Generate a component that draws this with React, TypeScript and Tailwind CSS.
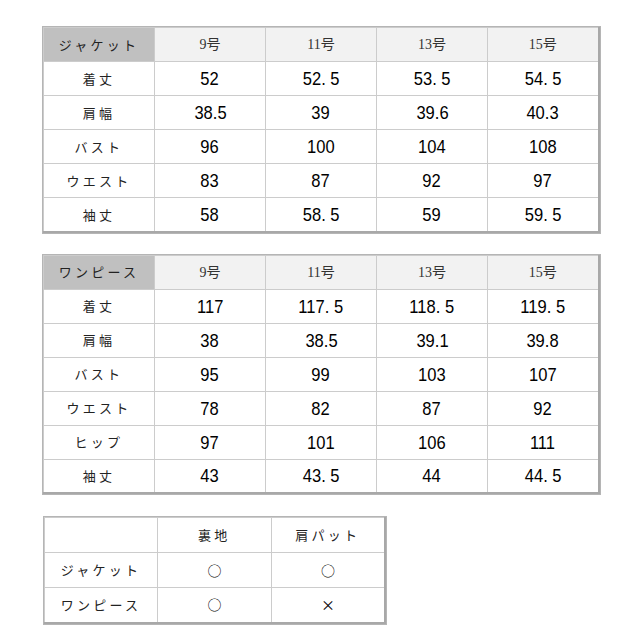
const jacket = {
  title: 'ジャケット',
  rows: [
    ['着丈', '52', '52. 5', '53. 5', '54. 5'],
    ['肩幅', '38.5', '39', '39.6', '40.3'],
    ['バスト', '96', '100', '104', '108'],
    ['ウエスト', '83', '87', '92', '97'],
    ['袖丈', '58', '58. 5', '59', '59. 5'],
  ],
};

const onepiece = {
  title: 'ワンピース',
  rows: [
    ['着丈', '117', '117. 5', '118. 5', '119. 5'],
    ['肩幅', '38', '38.5', '39.1', '39.8'],
    ['バスト', '95', '99', '103', '107'],
    ['ウエスト', '78', '82', '87', '92'],
    ['ヒップ', '97', '101', '106', '111'],
    ['袖丈', '43', '43. 5', '44', '44. 5'],
  ],
};

const sizes = ['9号', '11号', '13号', '15号'];

const jp = "font-['Noto_Sans_CJK_JP',sans-serif]";
const serifNum = "font-['Liberation_Serif','Noto_Sans_CJK_JP',serif]";
const num = "font-['Liberation_Sans','Noto_Sans_CJK_JP',sans-serif]";

const cell = 'border border-[#cccccc] text-center align-middle p-0';
const label = `${cell} ${jp} text-[13px] font-normal tracking-[0.25em] text-[#222]`;

const SizeTable = ({ data }: { data: typeof jacket }) => (
  <table className="w-[554px] table-fixed border-collapse border-r-2 border-b-2 border-[#a8a8a8] outline-1 outline-[#b5b5b5]">
    <thead>
      <tr className="h-[34px]">
        <th className={`${label} bg-[#c0c0c0] w-[111px]`}>{data.title}</th>
        {sizes.map(s => (
          <th
            key={s}
            className={`${cell} ${serifNum} bg-[#f2f2f2] text-[14px] font-normal text-[#333] w-[111px]`}>
            {s}
          </th>
        ))}
      </tr>
    </thead>
    <tbody>
      {data.rows.map(row => (
        <tr key={row[0]} className="h-[34px]">
          <td className={label}>{row[0]}</td>
          {row.slice(1).map((v, i) => (
            <td key={i} className={`${cell} ${num} text-[19px] leading-none text-black`}>
              <span className="inline-block scale-x-[0.87]">{v}</span>
            </td>
          ))}
        </tr>
      ))}
    </tbody>
  </table>
);

export default function App() {
  return (
    <div className="w-[640px] h-[640px] bg-white pt-[27px] pl-[43px]">
      <SizeTable data={jacket} />
      <div className="h-[22px]" />
      <SizeTable data={onepiece} />
      <div className="h-[23px]" />
      <table className="ml-px w-[342px] table-fixed border-collapse border-r-2 border-b-2 border-[#a8a8a8] outline-1 outline-[#b5b5b5]">
        <tbody>
          <tr className="h-[35px]">
            <td className={`${cell} w-[113px]`} />
            <td className={`${label} tracking-[0.1em]`}>裏地</td>
            <td className={`${label} tracking-[0.15em]`}>肩パット</td>
          </tr>
          {[
            ['ジャケット', '○', '○'],
            ['ワンピース', '○', '×'],
          ].map(r => (
            <tr key={r[0]} className="h-[35px]">
              <td className={label}>{r[0]}</td>
              <td className={`${cell} ${jp} text-[14px] text-black`}>{r[1]}</td>
              <td className={`${cell} ${jp} text-[14px] text-black`}>{r[2]}</td>
            </tr>
          ))}
        </tbody>
      </table>
    </div>
  );
}
